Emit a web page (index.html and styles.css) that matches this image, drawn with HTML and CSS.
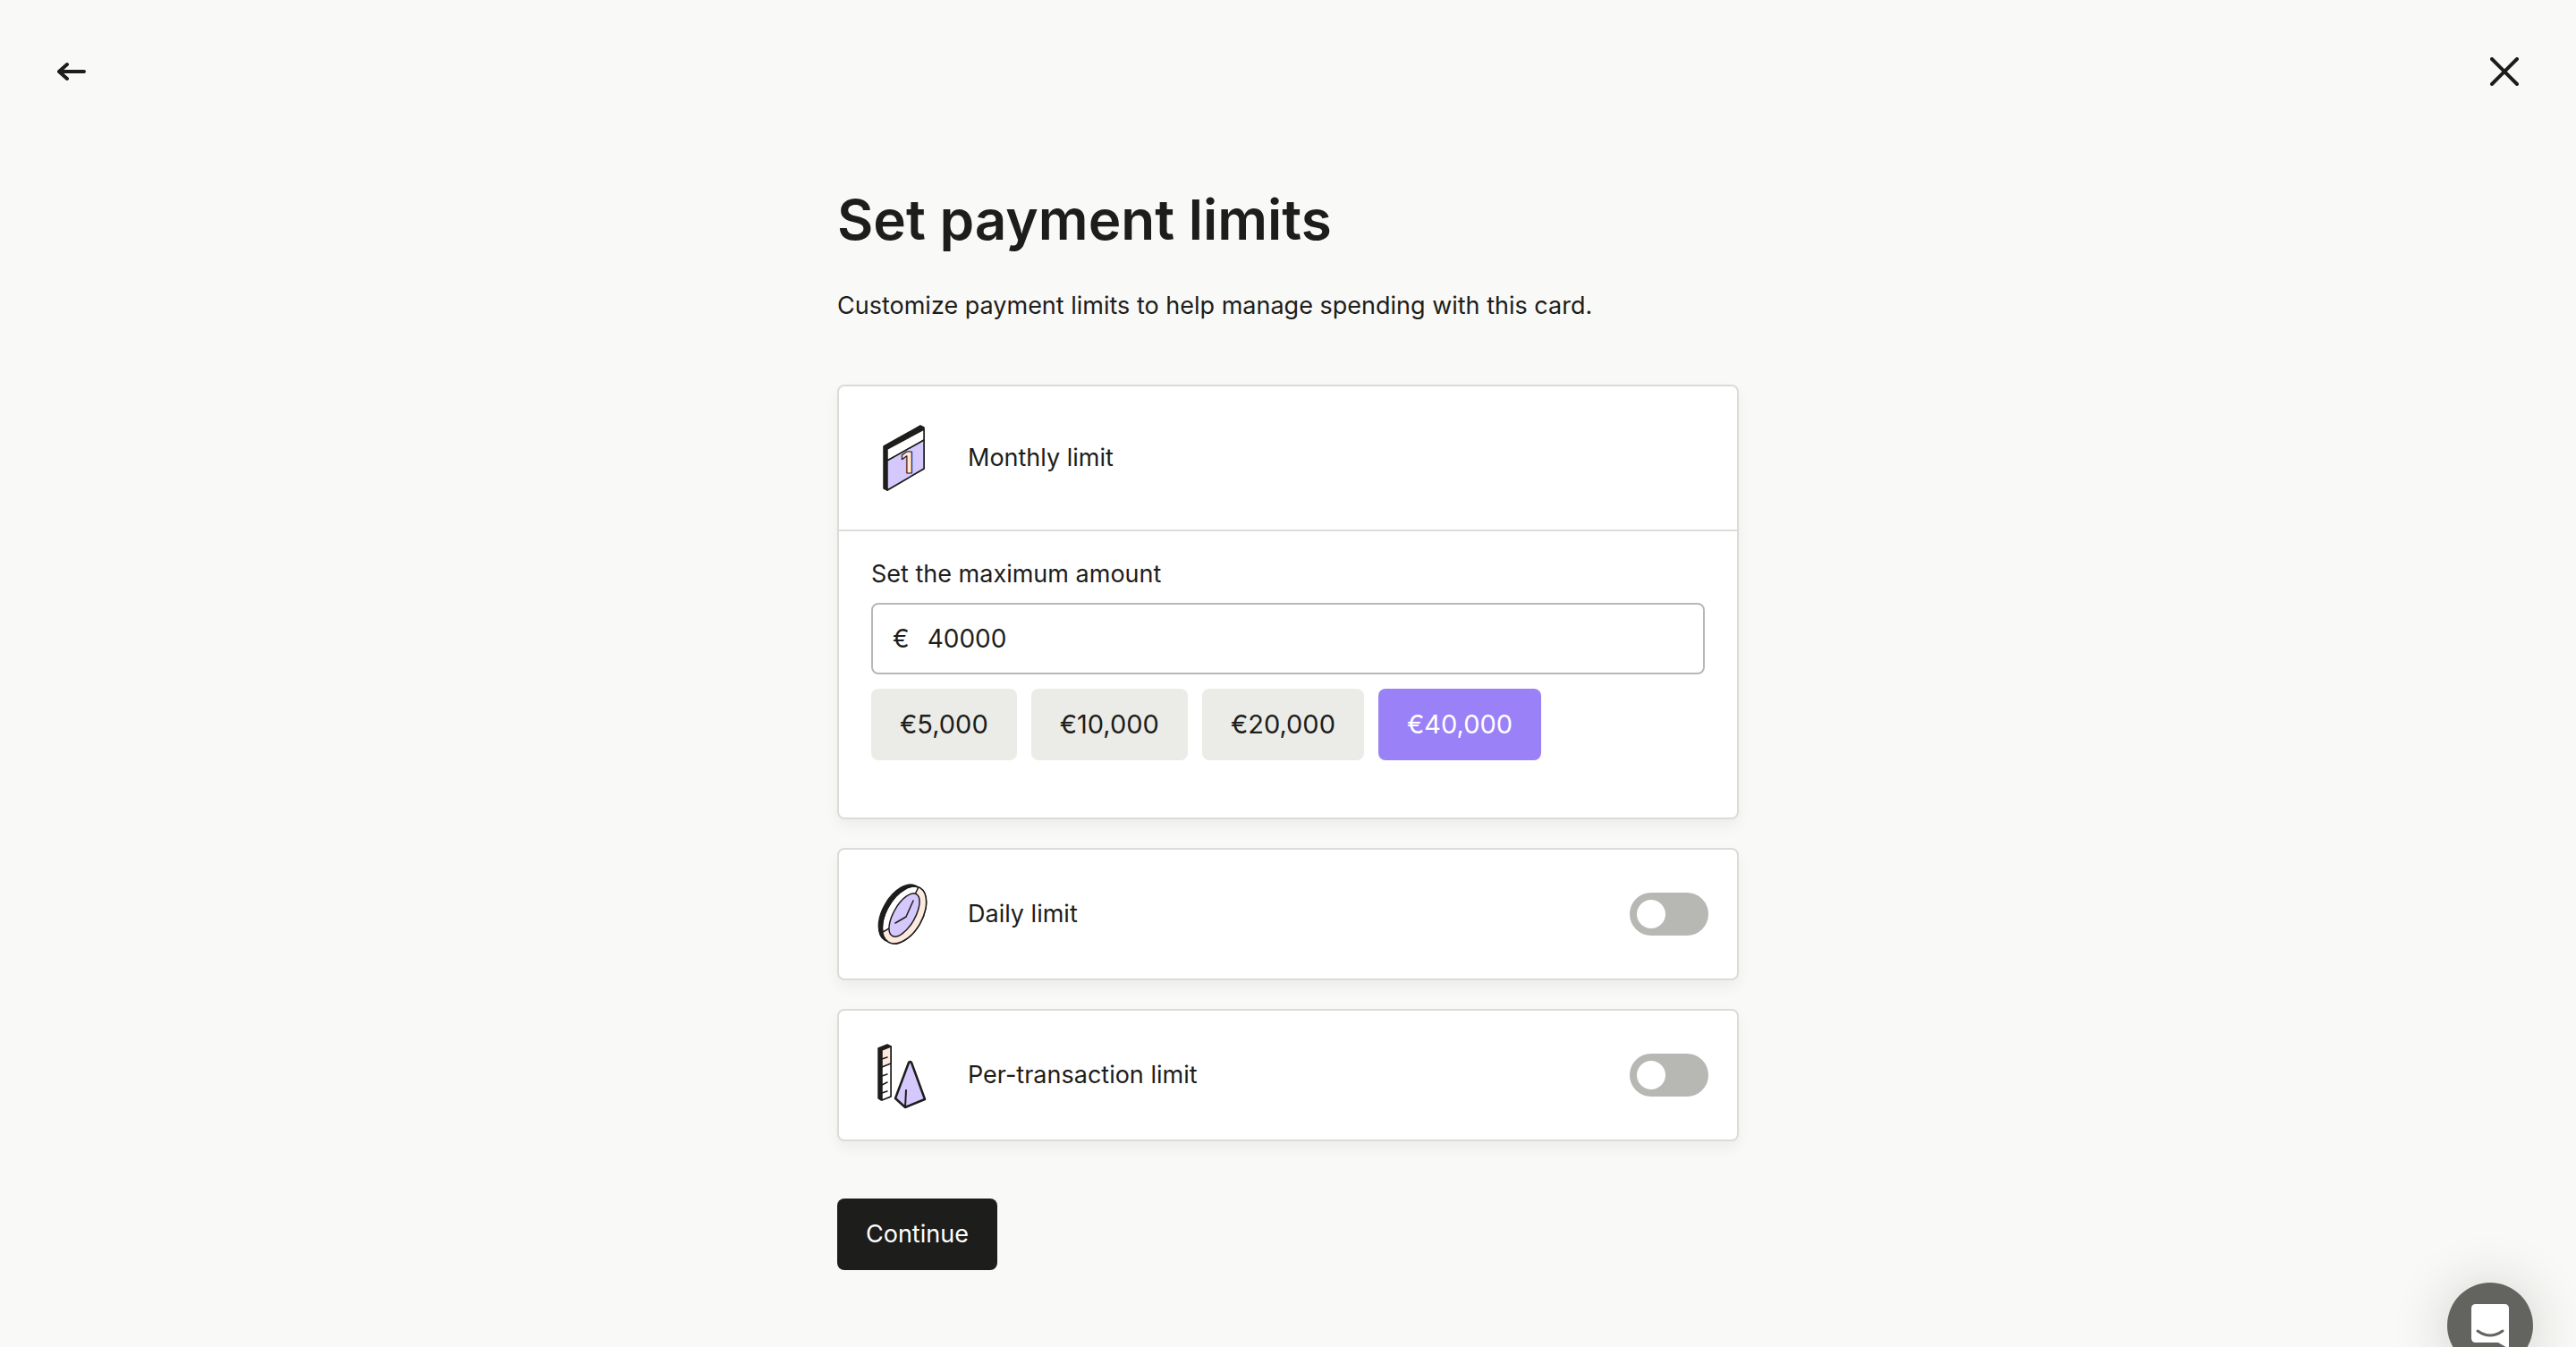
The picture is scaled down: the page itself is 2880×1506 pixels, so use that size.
FILE: index.html
```html
<!DOCTYPE html>
<html lang="en">
<head>
    <meta charset="UTF-8">
    <meta name="viewport" content="width=device-width, initial-scale=1">
    <title>Set payment limits</title>
    <link rel="stylesheet" href="styles.css">
</head>
<body>
    <header class="top-bar">
        <button type="button" class="icon-btn" aria-label="Back">
            <svg width="32" height="32" viewBox="0 0 32 32"><path d="M30 16H2M11 8L2 16L11 24"/></svg>
        </button>
        <button type="button" class="icon-btn" aria-label="Close">
            <svg width="32" height="32" viewBox="0 0 32 32"><path d="M2 2L30 30M30 2L2 30"/></svg>
        </button>
    </header>

    <main class="content">
        <h1>Set payment limits</h1>
        <p class="intro">Customize payment limits to help manage spending with this card.</p>

        <form id="limitsForm">
            <section class="card">
                <div class="card-header card-header-open">
                    <svg class="card-icon" viewBox="0 0 80 80">
                        <path class="dark" d="M18 27L59 4L63 6V52L22 76L18 74Z"/>
                        <path class="white" d="M22 30L63 8V20L22 43Z"/>
                        <path class="lilac" d="M22 43L63 20V52L22 76Z"/>
                        <text class="day" x="37" y="57">1</text>
                    </svg>
                    <h2>Monthly limit</h2>
                </div>
                <div class="card-body">
                    <label for="monthlyAmount">Set the maximum amount</label>
                    <div class="amount-field">
                        <span>€</span>
                        <input type="text" id="monthlyAmount" inputmode="numeric" value="40000">
                    </div>
                    <div class="presets">
                        <button type="button" class="preset" data-amount="5000">€5,000</button>
                        <button type="button" class="preset" data-amount="10000">€10,000</button>
                        <button type="button" class="preset" data-amount="20000">€20,000</button>
                        <button type="button" class="preset selected" data-amount="40000">€40,000</button>
                    </div>
                </div>
            </section>

            <section class="card">
                <div class="card-header">
                    <svg class="card-icon" viewBox="0 0 80 80">
                        <clipPath id="clockFace"><ellipse cx="41" cy="41" rx="20" ry="35" transform="rotate(30 41 41)"/></clipPath>
                        <ellipse class="dark" cx="37" cy="39" rx="20" ry="35" transform="rotate(30 37 39)"/>
                        <ellipse class="white" cx="41" cy="41" rx="20" ry="35" transform="rotate(30 41 41)"/>
                        <path class="peach" clip-path="url(#clockFace)" d="M60 3L53 18L24 56L10 64V80H80V3Z"/>
                        <ellipse class="outline" cx="41" cy="41" rx="20" ry="35" transform="rotate(30 41 41)"/>
                        <ellipse class="lilac" cx="41" cy="41" rx="12" ry="27" transform="rotate(30 41 41)"/>
                        <path class="outline" d="M51 25L43 43L31 50"/>
                    </svg>
                    <h2><label for="dailyLimit">Daily limit</label></h2>
                    <input type="checkbox" role="switch" class="toggle" id="dailyLimit">
                </div>
            </section>

            <section class="card">
                <div class="card-header">
                    <svg class="card-icon" viewBox="0 0 80 80">
                        <path class="dark" d="M12 10L22 6L26 8V64L15 68L12 66Z"/>
                        <path class="white" d="M16 12L26 8V64L16 68Z"/>
                        <path class="peach" d="M16 12L26 8V27L16 31Z"/>
                        <path class="outline" d="M16 22L22 20M16 41L22 39M16 51L22 48M16 60L22 58"/>
                        <path class="lilac" stroke-width="2.5" d="M46 26Q48 24 49 26L64 67L42 76L31 66Z"/>
                        <path class="outline" stroke-width="2" d="M43 57L42 76"/>
                    </svg>
                    <h2><label for="transactionLimit">Per-transaction limit</label></h2>
                    <input type="checkbox" role="switch" class="toggle" id="transactionLimit">
                </div>
            </section>

            <button type="submit" class="submit-btn">Continue</button>
        </form>
    </main>

    <button type="button" class="chat-btn" aria-label="Open chat">
        <svg width="42" height="50" viewBox="0 0 42 50">
            <path fill="#fff" d="M5 0H37Q42 0 42 5V50L30 43H5Q0 43 0 38V5Q0 0 5 0Z"/>
            <path fill="none" stroke="#63645f" stroke-width="3" stroke-linecap="round" d="M7 30Q21 40 35 30"/>
        </svg>
    </button>

    <script>
        const amount = document.getElementById('monthlyAmount');
        const presets = document.querySelectorAll('.preset');

        function markPreset() {
            presets.forEach(p => p.classList.toggle('selected', p.dataset.amount === amount.value));
        }

        presets.forEach(p => p.addEventListener('click', () => {
            amount.value = p.dataset.amount;
            markPreset();
        }));
        amount.addEventListener('input', markPreset);

        document.getElementById('limitsForm').addEventListener('submit', e => e.preventDefault());
    </script>
</body>
</html>
```

FILE: styles.css
```css
* { box-sizing: border-box; }
body { margin: 0; background: #f9f9f7; color: #1d1d1b; font-family: Inter, "Liberation Sans", sans-serif; font-size: 27px; line-height: 40px; }
button, input { font: inherit; color: inherit; }
button { border: none; cursor: pointer; }

.top-bar { display: flex; justify-content: space-between; padding: 64px; }
.icon-btn { display: flex; padding: 0; background: none; }
.icon-btn path { fill: none; stroke: #1d1d1b; stroke-width: 4; stroke-linecap: round; stroke-linejoin: round; }

.content { max-width: 1072px; margin: 0 auto; padding: 46px 32px 86px; }
h1 { margin: 0; font-size: 62px; line-height: 80px; font-weight: 600; }
.intro { margin: 36px 0 68px; }

.card { margin-bottom: 32px; background: #fff; border: 2px solid #dbdcd7; border-radius: 8px; box-shadow: 0 8px 16px rgba(29, 29, 27, 0.05); }
.card-header { display: flex; align-items: center; gap: 32px; padding: 32px; }
.card-header-open { padding: 40px 32px; border-bottom: 2px solid #dbdcd7; }
.card-icon { width: 80px; height: 80px; flex: none; stroke: #1d1d1b; stroke-width: 1.5; stroke-linejoin: round; stroke-linecap: round; }
.card-header h2 { flex: 1; margin: 0; font-size: 27px; font-weight: 400; }
.card-body { padding: 28px 36px 64px; }

.dark { fill: #1d1d1b; }
.white { fill: #fff; }
.lilac { fill: #d5c8fd; }
.peach { fill: #fee9df; }
.outline { fill: none; }
.day { fill: #fee9df; font-size: 32px; font-weight: 800; stroke-width: 1.2; }

.card-body label { display: block; margin-bottom: 12px; }
.amount-field { display: flex; align-items: center; gap: 20px; height: 80px; padding: 0 22px; border: 2px solid #b7b8b3; border-radius: 8px; font-size: 28px; }
.amount-field input { flex: 1; min-width: 0; padding: 0; border: none; outline: none; background: none; }
.presets { display: flex; flex-wrap: wrap; gap: 16px; margin-top: 16px; }
.preset, .submit-btn { padding: 20px 32px; border-radius: 8px; }
.preset { background: #ebece7; font-size: 29px; }
.preset.selected { background: #9b81f7; color: #fff; }

.toggle { appearance: none; width: 88px; height: 48px; margin: 0; padding: 8px; border-radius: 24px; background: #b7b8b3; cursor: pointer; }
.toggle::before { content: ""; display: block; width: 32px; height: 32px; border-radius: 50%; background: #fff; }
.toggle:checked { background: #9b81f7; }
.toggle:checked::before { margin-left: auto; }

.submit-btn { margin-top: 32px; background: #1d1d1b; color: #fff; }

.chat-btn { position: fixed; right: 48px; bottom: -24px; display: flex; justify-content: center; width: 96px; height: 96px; padding: 24px 0 0; border-radius: 50%; background: #63645f; box-shadow: 0 4px 64px rgba(29, 29, 27, 0.2); }
```
